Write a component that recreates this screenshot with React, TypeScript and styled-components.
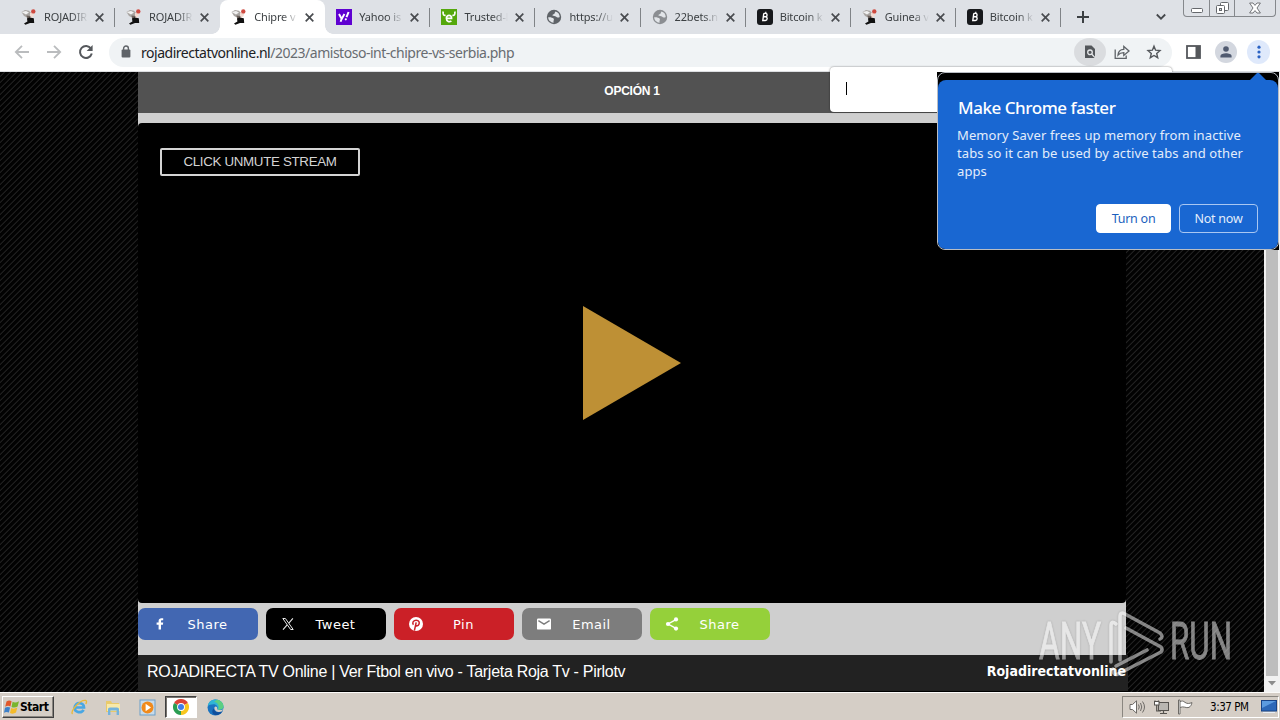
import React from 'react';
import styled, { createGlobalStyle, css } from 'styled-components';

type Favicon = 'roja' | 'yahoo' | 'trusted' | 'globe' | 'globeLight' | 'bitcoin';

interface ITab {
  title: string;
  icon: Favicon;
  active?: boolean;
  // divider on the right side of the tab
  divider?: boolean;
}

const tabs: ITab[] = [
  { title: 'ROJADIR', icon: 'roja', divider: true },
  { title: 'ROJADIR', icon: 'roja' },
  { title: 'Chipre v', icon: 'roja', active: true },
  { title: 'Yahoo is', icon: 'yahoo', divider: true },
  { title: 'Trusted-l', icon: 'trusted', divider: true },
  { title: 'https://u', icon: 'globe', divider: true },
  { title: '22bets.n', icon: 'globeLight', divider: true },
  { title: 'Bitcoin k', icon: 'bitcoin', divider: true },
  { title: 'Guinea v', icon: 'roja', divider: true },
  { title: 'Bitcoin k', icon: 'bitcoin', divider: true },
];

const uiFont = '"DejaVu Sans Condensed", "DejaVu Sans", sans-serif';
const softFont = '"Noto Sans", "Open Sans", sans-serif';

const GlobalStyle = createGlobalStyle`
  * { box-sizing: border-box; }
  body {
    margin: 0;
    overflow: hidden;
    font-family: "Liberation Sans", sans-serif;
  }
  svg { display: block; flex: none; }
`;

const Screen = styled.div`
  position: relative;
  display: flex;
  flex-direction: column;
  width: 1280px;
  height: 720px;
  overflow: hidden;
`;

/* ---- tab strip ---- */

const TabStrip = styled.div`
  display: flex;
  height: 34px;
  padding-left: 10px;
  background: #dee1e6;
`;

const TabItem = styled.div<{ $active?: boolean; $divider?: boolean }>`
  position: relative;
  display: flex;
  align-items: center;
  width: 105.1px;
  height: 34px;
  padding-left: 11px;
  ${p => p.$active && css`
    background: #fff;
    border-radius: 8px 8px 0 0;
    &::before, &::after {
      content: "";
      position: absolute;
      bottom: 0;
      width: 8px;
      height: 8px;
    }
    &::before {
      left: -8px;
      background: radial-gradient(circle at 0 0, transparent 7.5px, #fff 8px);
    }
    &::after {
      right: -8px;
      background: radial-gradient(circle at 100% 0, transparent 7.5px, #fff 8px);
    }
  `}
  ${p => p.$divider && css`
    &::after {
      content: "";
      position: absolute;
      right: 0;
      top: 8px;
      width: 1px;
      height: 19px;
      background: #808387;
    }
  `}
`;

const TabTitle = styled.span`
  width: 46px;
  margin-left: 7px;
  white-space: nowrap;
  font: 11px/16px ${softFont};
  letter-spacing: -0.15px;
  color: #3c4043;
  mask-image: linear-gradient(90deg, #000 28px, transparent 44px);
`;

const TabClose = styled.span`
  display: flex;
  margin-left: 5px;
`;

const NewTab = styled.div`
  display: flex;
  align-items: center;
  width: 44px;
  padding-left: 16px;
`;

const StripRight = styled.div`
  display: flex;
  align-items: flex-start;
  margin-left: auto;
  padding-right: 4px;
`;

const TabSearch = styled.div`
  display: flex;
  padding: 13px 17px 0 0;
`;

const WindowControls = styled.div`
  display: flex;
  height: 17px;
  border: 1px solid #85888c;
  border-top: 0;
  border-radius: 0 0 4px 4px;
`;

const WindowControl = styled.div<{ $width: number }>`
  display: flex;
  align-items: center;
  justify-content: center;
  width: ${p => p.$width}px;
  & + & { border-left: 1px solid #85888c; }
`;

/* ---- toolbar ---- */

const Toolbar = styled.div`
  display: flex;
  align-items: center;
  height: 38px;
  padding: 0 9px 1px 13px;
  background: #fff;
  border-bottom: 1px solid #dcdee1;
`;

const NavButtons = styled.div`
  display: flex;
  align-items: center;
  gap: 14px;
  width: 96px;
`;

const Omnibox = styled.div`
  display: flex;
  align-items: center;
  width: 1063px;
  height: 29px;
  padding: 0 2px 0 12px;
  border-radius: 15px;
  background: #f0f3f5;
`;

const Url = styled.span`
  margin: 1px 0 0 9px;
  font: 14px/20px ${softFont};
  letter-spacing: -0.48px;
  color: #686c71;
  b { font-weight: 400; color: #202124; }
`;

const OmniIcons = styled.div`
  display: flex;
  align-items: center;
  margin-left: auto;
`;

const RoundButton = styled.span<{ $bg?: string; $width: number; $height: number }>`
  display: flex;
  align-items: center;
  justify-content: center;
  width: ${p => p.$width}px;
  height: ${p => p.$height}px;
  border-radius: 50%;
  background: ${p => p.$bg || 'transparent'};
`;

const ToolbarRight = styled.div`
  display: flex;
  align-items: center;
  gap: 10px;
  flex: 1;
  padding-left: 14px;
`;

/* ---- page ---- */

const Viewport = styled.div`
  display: flex;
  height: 620px;
`;

const PageBackground = styled.div`
  display: flex;
  width: 1264px;
  padding-left: 138px;
  background: #000 repeating-linear-gradient(135deg, #020202 0, #020202 2.4px, #262626 3.3px, #020202 4.243px);
`;

const PageColumn = styled.div`
  display: flex;
  flex-direction: column;
  width: 990px;
`;

const OptionBar = styled.div`
  width: 988px;
  height: 41px;
  background: #525252;
  color: #fff;
  font-size: 12px;
  font-weight: 700;
  line-height: 38px;
  letter-spacing: -0.25px;
  text-align: center;
`;

const PlayerFrame = styled.div`
  width: 988px;
  padding-top: 10px;
  background: #cfcfcf;
`;

const Player = styled.div`
  display: flex;
  flex-direction: column;
  height: 480px;
  padding: 25px 22px;
  border-radius: 4px;
  background: #000;
`;

const UnmuteButton = styled.button`
  width: 200px;
  height: 28px;
  padding: 0;
  border: 2px solid #d4d4d4;
  border-radius: 2px;
  background: #000;
  color: #d4d4d4;
  font: 13.33px/24px "Liberation Sans", sans-serif;
  letter-spacing: -0.32px;
`;

const PlayIcon = styled.svg`
  margin: 130px 0 0 423px;
`;

const ShareBar = styled.div`
  display: flex;
  gap: 8px;
  height: 52px;
  padding-top: 5px;
`;

const ShareButton = styled.div<{ $color: string }>`
  display: flex;
  align-items: center;
  width: 120px;
  height: 32px;
  padding-left: 14px;
  border-radius: 7px;
  background: ${p => p.$color};
`;

const ShareLabel = styled.span`
  flex: 1;
  padding: 2px 11px 0 0;
  text-align: center;
  color: #fff;
  font: 13px/20px "DejaVu Sans", sans-serif;
  letter-spacing: 0.45px;
`;

const PageFooter = styled.div`
  display: flex;
  justify-content: space-between;
  height: 37px;
  padding: 6px 2px 0 9px;
  border-bottom: 1px solid #000;
  background: #222;
  color: #fff;
  font-size: 16px;
  line-height: 21px;
  letter-spacing: -0.29px;
`;

const SiteName = styled.b`
  font: 700 14px/20px "DejaVu Sans Condensed", "DejaVu Sans", sans-serif;
  letter-spacing: 0;
`;

const Scrollbar = styled.div`
  display: flex;
  flex-direction: column;
  align-items: center;
  justify-content: flex-end;
  width: 16px;
  padding-bottom: 6px;
  background: #f1f1f1;
`;

const ScrollThumb = styled.div`
  width: 12px;
  flex: 1;
  margin-bottom: 5px;
  background: #bdbdbd;
`;

/* ---- popups ---- */

const FindPopup = styled.div`
  position: absolute;
  left: 830px;
  top: 67px;
  display: flex;
  align-items: center;
  width: 342px;
  height: 45px;
  padding: 0 0 3px 16px;
  border-radius: 4px;
  background: #fff;
  box-shadow: 0 0 2px rgba(0, 0, 0, 0.55);
`;

const Caret = styled.span`
  width: 1px;
  height: 13px;
  background: #000;
`;

const BubbleFrame = styled.div`
  position: absolute;
  left: 937px;
  top: 72px;
  width: 342px;
  height: 178px;
  background: #000;
`;

const BubbleOutline = styled.div`
  display: flex;
  flex-direction: column;
  height: 178px;
  border: 1px solid #b9bdc4;
  border-radius: 8px;
  overflow: hidden;
`;

const BubbleArrow = styled.svg`
  align-self: flex-end;
  margin-right: 12px;
`;

const BubbleBody = styled.div`
  flex: 1;
  padding: 17px 20px 0 19px;
  border-radius: 8px 8px 7px 7px;
  background: #1967d2;
  color: #fff;
`;

const BubbleTitle = styled.div`
  padding-left: 1px;
  font: 500 17px/21px ${softFont};
  letter-spacing: -0.45px;
`;

const BubbleText = styled.div`
  margin-top: 8px;
  color: #e3edfb;
  font: 13px/18px ${softFont};
  letter-spacing: 0.1px;
  white-space: nowrap;
`;

const BubbleActions = styled.div`
  display: flex;
  justify-content: flex-end;
  gap: 8px;
  margin-top: 24px;
`;

const BubbleButton = styled.button<{ $primary?: boolean }>`
  width: ${p => (p.$primary ? 75 : 79)}px;
  height: 29px;
  padding: 0;
  border: 1px solid ${p => (p.$primary ? '#fff' : '#a9c7f2')};
  border-radius: 4px;
  background: ${p => (p.$primary ? '#fff' : '#1967d2')};
  color: ${p => (p.$primary ? '#1b5fbe' : '#e3edfb')};
  font: 12.5px/20px ${softFont};
  letter-spacing: -0.25px;
`;

const Watermark = styled.svg`
  position: absolute;
  left: 1030px;
  top: 604px;
  filter: drop-shadow(0 0 1px rgba(0, 0, 0, 0.35));
`;

/* ---- taskbar ---- */

const Taskbar = styled.div`
  display: flex;
  align-items: center;
  height: 28px;
  padding: 1px 1px 0 2px;
  border-top: 1px solid #fbfaf8;
  background: #d5cec6;
`;

const StartButton = styled.div`
  display: flex;
  align-items: center;
  width: 52px;
  height: 22px;
  padding-left: 1px;
  border: 1px solid;
  border-color: #fff #404040 #404040 #fff;
  box-shadow: inset -1px -1px #8a8680;
  font: 700 12px/20px ${uiFont};
  letter-spacing: -0.45px;
`;

const QuickLaunch = styled.div`
  display: flex;
  align-items: center;
  margin-left: 8px;
`;

const LaunchItem = styled.div<{ $pressed?: boolean }>`
  display: flex;
  align-items: center;
  justify-content: center;
  width: 34px;
  height: 22px;
  ${p => p.$pressed && css`
    width: 32px;
    margin: 0 1px;
    background: #fff;
    border: 1px solid;
    border-color: #404040 #fff #fff #404040;
    box-shadow: inset 1px 1px #77736e;
  `}
`;

const Tray = styled.div`
  display: flex;
  align-items: center;
  width: 157px;
  height: 22px;
  margin-left: auto;
  padding-left: 6px;
  border: 1px solid;
  border-color: #8a8680 #fff #fff #8a8680;
`;

const TrayIcons = styled.div`
  display: flex;
  gap: 7px;
`;

const Clock = styled.span`
  margin-left: 17px;
  margin-right: 12px;
  white-space: nowrap;
  font: 11.5px/16px ${uiFont};
  letter-spacing: -0.45px;
`;

const RojaIcon = () => (
  <svg width="16" height="16" viewBox="0 0 16 16">
    <path d="M0.5 3 L4 1 L8 1.8 L10 4 L9.4 7 L6 8.6 L3 7z" fill="#a9a5a2" />
    <path d="M0.5 3 L5 2 L8 3.6 L5 5.4z" fill="#f1f1f1" />
    <path d="M9 4 L13.4 3.6 L12.6 7 L9 10z" fill="#f3dcd3" />
    <circle cx="12.3" cy="2.4" r="2.2" fill="#cf4a40" />
    <path d="M5.4 6.5 L9.5 7 L9 10 L6.4 10z" fill="#6b605b" />
    <path d="M6 9.6 L8.4 8.6 L12.8 9.2 L13.2 14 L9 14 L4.4 15.8 L3 14.6 L6.4 12.6z" fill="#111" />
  </svg>
);

const YahooIcon = () => (
  <svg width="16" height="16" viewBox="0 0 16 16">
    <rect width="16" height="16" fill="#5f01d1" />
    <path d="M3 5 L5.7 10 L8.4 5 M5.7 9.5 L4.6 12.8" fill="none" stroke="#fff" strokeWidth="1.9" />
    <path d="M12.6 3 L10.5 8.2" stroke="#fff" strokeWidth="2" />
    <circle cx="9.8" cy="10.3" r="1.1" fill="#fff" />
  </svg>
);

const TrustedIcon = () => (
  <svg width="16" height="16" viewBox="0 0 16 16">
    <rect width="16" height="16" fill="#55a80c" />
    <path d="M2.2 2.5 C1.6 5.4 2.6 6.6 4.6 6.4 M13.8 2.5 C14.4 5.4 13.4 6.6 11.4 6.4" fill="none" stroke="#fff" strokeWidth="1.7" />
    <path d="M5.5 9.4 H10.6 C10.8 5.4 5.4 5.4 5.4 9.3 C5.4 12.9 8.5 13.2 10.4 12" fill="none" stroke="#fff" strokeWidth="1.7" />
  </svg>
);

const GlobeIcon = ({ color }: { color: string }) => (
  <svg width="16" height="16" viewBox="0 0 16 16">
    <circle cx="8" cy="8" r="7.2" fill={color} />
    <path d="M2.2 8.3 C4.5 8 6.6 8.6 7.6 9.6 C8.6 10.8 7 11.8 7.6 13.7 C4.5 13.5 2.2 11.2 2.2 8.3z" fill="#e1e4e8" />
    <path d="M9.4 2.5 C12 3 13.6 5.2 13.7 7.9 C12.4 9 10.8 8.4 10 7.4 L6.4 6.6 C6.2 5.2 8.6 5.4 8.6 4.2z" fill="#e1e4e8" />
  </svg>
);

const BitcoinIcon = () => (
  <svg width="16" height="16" viewBox="0 0 16 16">
    <rect width="16" height="16" rx="3" fill="#17191c" />
    <path d="M6.8 4.4 H8.6 C10.6 4.4 10.6 7.5 8.6 7.8 H6.8 M6.2 7.8 H8.6 C10.9 8 10.5 11.5 8.4 11.5 H5.8 L6.8 4.4" fill="none" stroke="#fff" strokeWidth="1.4" />
    <path d="M8.8 2.8 V4" stroke="#fff" strokeWidth="1.2" />
  </svg>
);

const renderFavicon = (icon: Favicon) => {
  switch (icon) {
    case 'yahoo': return <YahooIcon />;
    case 'trusted': return <TrustedIcon />;
    case 'globe': return <GlobeIcon color="#5f6368" />;
    case 'globeLight': return <GlobeIcon color="#8b8e92" />;
    case 'bitcoin': return <BitcoinIcon />;
    default: return <RojaIcon />;
  }
};

const BrowserTabs = () => (
  <TabStrip>
    {tabs.map((tab, i) => (
      <TabItem key={i} $active={tab.active} $divider={tab.divider}>
        {renderFavicon(tab.icon)}
        <TabTitle>{tab.title}</TabTitle>
        <TabClose>
          <svg width="9" height="9" viewBox="0 0 9 9">
            <path d="M0.7 0.7 L8.3 8.3 M8.3 0.7 L0.7 8.3" stroke="#494c50" strokeWidth="1.7" />
          </svg>
        </TabClose>
      </TabItem>
    ))}
    <NewTab>
      <svg width="12" height="12" viewBox="0 0 12 12">
        <path d="M6 0 V12 M0 6 H12" stroke="#3c4043" strokeWidth="2" />
      </svg>
    </NewTab>
    <StripRight>
      <TabSearch>
        <svg width="10" height="8" viewBox="0 0 10 8">
          <path d="M0.8 1.5 L5 5.7 L9.2 1.5" fill="none" stroke="#45484c" strokeWidth="1.8" />
        </svg>
      </TabSearch>
      <WindowControls>
        <WindowControl $width={25}>
          <svg width="12" height="16" viewBox="0 0 12 16">
            <rect x="0.5" y="8.5" width="11" height="4" rx="1" fill="#fff" stroke="#65686c" />
          </svg>
        </WindowControl>
        <WindowControl $width={25}>
          <svg width="13" height="14" viewBox="0 0 13 14">
            <rect x="4.5" y="1.5" width="8" height="8" rx="1" fill="#fff" stroke="#65686c" />
            <rect x="0.5" y="4.5" width="8" height="8" rx="1" fill="#fff" stroke="#65686c" />
            <rect x="3.5" y="7.5" width="2" height="2" fill="#dee1e6" stroke="#65686c" />
          </svg>
        </WindowControl>
        <WindowControl $width={41}>
          <svg width="12" height="12" viewBox="0 0 12 12">
            <path d="M0.6 1 H4 L6 3.4 L8 1 H11.4 L8 6 L11.4 11 H8 L6 8.6 L4 11 H0.6 L4 6z" fill="#fff" stroke="#65686c" strokeWidth="0.9" />
          </svg>
        </WindowControl>
      </WindowControls>
    </StripRight>
  </TabStrip>
);

const BrowserToolbar = () => (
  <Toolbar>
    <NavButtons>
      <svg width="18" height="18" viewBox="0 0 18 18" fill="none" stroke="#babcbe" strokeWidth="1.8">
        <path d="M16 9 H3 M9 2.8 L2.8 9 L9 15.2" />
      </svg>
      <svg width="18" height="18" viewBox="0 0 18 18" fill="none" stroke="#babcbe" strokeWidth="1.8">
        <path d="M2 9 H15 M9 2.8 L15.2 9 L9 15.2" />
      </svg>
      <svg width="18" height="18" viewBox="0 0 18 18">
        <path d="M14 5.6 A6 6 0 1 0 14.8 10.6" fill="none" stroke="#55585c" strokeWidth="2" />
        <path d="M15.6 2 V8 H9.6z" fill="#55585c" />
      </svg>
    </NavButtons>
    <Omnibox>
      <svg width="11" height="14" viewBox="0 0 11 14">
        <rect x="0.6" y="4.6" width="8.8" height="8" rx="1" fill="#5f6368" />
        <path d="M2.6 6 V3.4 A2.4 2.4 0 0 1 7.4 3.4 V6" fill="none" stroke="#5f6368" strokeWidth="1.4" />
      </svg>
      <Url><b>rojadirectatvonline.nl</b>/2023/amistoso-int-chipre-vs-serbia.php</Url>
      <OmniIcons>
        <RoundButton $bg="#dadcdf" $width={32} $height={28}>
          <svg width="12" height="14" viewBox="0 0 12 14">
            <path d="M1 0.5 H7.5 L11 4 V13 H1z" fill="#54575b" />
            <circle cx="6" cy="7.3" r="2.3" fill="#54575b" stroke="#e6e8ea" strokeWidth="1.3" />
            <path d="M7.6 9 L11 12.6" stroke="#e6e8ea" strokeWidth="1.3" />
          </svg>
        </RoundButton>
        <RoundButton $width={32} $height={28}>
          <svg width="16" height="16" viewBox="0 0 16 16" fill="none" stroke="#5f6368" strokeWidth="1.3">
            <path d="M1.2 5.5 V14.3 H12.2 V11.5" />
            <path d="M4 11 C4.3 7.2 6.5 5.4 9.8 5.3 V2.4 L15 7 L9.8 11.4 V8.6 C7.4 8.6 5.5 9.2 4 11z" />
          </svg>
        </RoundButton>
        <RoundButton $width={32} $height={28}>
          <svg width="16" height="16" viewBox="0 0 16 16">
            <path d="M8 2.2 L9.6 6.2 L14 6.6 L10.7 9.5 L11.7 13.7 L8 11.5 L4.3 13.7 L5.3 9.5 L2 6.6 L6.4 6.2z" fill="none" stroke="#54575b" strokeWidth="1.4" />
          </svg>
        </RoundButton>
      </OmniIcons>
    </Omnibox>
    <ToolbarRight>
      <svg width="19" height="14" viewBox="0 0 19 14">
        <rect x="1" y="1" width="13" height="12" fill="none" stroke="#54575b" strokeWidth="1.8" />
        <rect x="9.5" y="1" width="4.5" height="12" fill="#54575b" />
      </svg>
      <RoundButton $bg="#d3d7df" $width={22} $height={22}>
        <svg width="12" height="12" viewBox="0 0 12 12" fill="#505a70">
          <circle cx="6" cy="3" r="2.8" />
          <path d="M0.4 11.6 V10 C0.6 6.4 11.4 6.4 11.6 10 V11.6z" />
        </svg>
      </RoundButton>
      <RoundButton $bg="#dfe9fb" $width={23} $height={24}>
        <svg width="4" height="14" viewBox="0 0 4 14" fill="#2a62c4">
          <circle cx="2" cy="2.2" r="1.6" />
          <circle cx="2" cy="7" r="1.6" />
          <circle cx="2" cy="11.8" r="1.6" />
        </svg>
      </RoundButton>
    </ToolbarRight>
  </Toolbar>
);

const ShareButtons = () => (
  <ShareBar>
    <ShareButton $color="#4267b2">
      <svg width="16" height="16" viewBox="0 0 16 16">
        <path d="M6.6 13.5 V8.8 H4.6 V6.5 H6.6 V5 C6.6 3 7.8 2.2 9.4 2.2 L11.2 2.3 V4.3 H10 C9.1 4.3 9 4.7 9 5.4 V6.5 H11.2 L10.9 8.8 H9 V13.5z" fill="#fff" />
      </svg>
      <ShareLabel>Share</ShareLabel>
    </ShareButton>
    <ShareButton $color="#000">
      <svg width="16" height="16" viewBox="0 0 16 16" fill="none" stroke="#e8e8e8">
        <path d="M2.8 2.5 H5.4 L13.2 13.5 H10.6z" strokeWidth="1" />
        <path d="M12.9 2.4 L8.8 7.2 M7.2 8.8 L3 13.6" strokeWidth="1.1" />
      </svg>
      <ShareLabel>Tweet</ShareLabel>
    </ShareButton>
    <ShareButton $color="#cb2027">
      <svg width="16" height="16" viewBox="0 0 16 16">
        <circle cx="8" cy="8" r="7" fill="#fff" />
        <path d="M6.4 14.6 L8.2 6.4 M5.4 8.8 C3.8 6.6 5.6 4.2 8.2 4.2 C11 4.2 11.8 6.4 10.9 8.4 C10.1 10.2 8.4 10.2 7.6 9.2" fill="none" stroke="#cb2027" strokeWidth="1.5" />
      </svg>
      <ShareLabel>Pin</ShareLabel>
    </ShareButton>
    <ShareButton $color="#7d7d7d">
      <svg width="16" height="16" viewBox="0 0 16 16">
        <rect x="1" y="2.4" width="14" height="11.2" rx="1.2" fill="#fff" />
        <path d="M2.4 4.6 L8 8.2 L13.6 4.6" fill="none" stroke="#7d7d7d" strokeWidth="1.4" />
      </svg>
      <ShareLabel>Email</ShareLabel>
    </ShareButton>
    <ShareButton $color="#95d03a">
      <svg width="16" height="16" viewBox="0 0 16 16">
        <path d="M12 3.6 L4 8 L12 12.4" fill="none" stroke="#fff" strokeWidth="1.4" />
        <g fill="#fff">
          <circle cx="12" cy="3.4" r="2.1" />
          <circle cx="4" cy="8" r="2.1" />
          <circle cx="12" cy="12.6" r="2.1" />
        </g>
      </svg>
      <ShareLabel>Share</ShareLabel>
    </ShareButton>
  </ShareBar>
);

const MemorySaverBubble = () => (
  <BubbleFrame>
    <BubbleOutline>
      <BubbleArrow width="16" height="7" viewBox="0 0 16 7">
        <path d="M0 7 L7 0 H9 L16 7z" fill="#1967d2" />
      </BubbleArrow>
      <BubbleBody>
        <BubbleTitle>Make Chrome faster</BubbleTitle>
        <BubbleText>
          Memory Saver frees up memory from inactive<br />
          tabs so it can be used by active tabs and other<br />
          apps
        </BubbleText>
        <BubbleActions>
          <BubbleButton $primary>Turn on</BubbleButton>
          <BubbleButton>Not now</BubbleButton>
        </BubbleActions>
      </BubbleBody>
    </BubbleOutline>
  </BubbleFrame>
);

const AnyRunMark = () => (
  <Watermark width="210" height="74" viewBox="0 0 210 74" opacity="0.5">
    <g fill="#fff" stroke="#fff" strokeWidth="0.9" fontFamily="Roboto, sans-serif" fontSize="52">
      <text x="9" y="55" textLength="62" lengthAdjust="spacingAndGlyphs">ANY</text>
      <text x="140" y="55" textLength="62" lengthAdjust="spacingAndGlyphs">RUN</text>
    </g>
    <g fill="none" stroke="#fff" strokeWidth="3.6" strokeLinejoin="round" strokeLinecap="round">
      <path d="M86 20 Q81 16 81 22 V58" />
      <path d="M90 56 V13 Q90 7 95 10 L130 29 Q134 33 130 35" />
      <path d="M96 24 L131 43 Q133 46 131 48 L88 70 Q83 72 83 65" />
      <path d="M86 62 L117 46" />
    </g>
  </Watermark>
);

const WindowsTaskbar = () => (
  <Taskbar>
    <StartButton>
      <svg width="16" height="16" viewBox="0 0 16 16">
        <path d="M2.5 2.5 C4.5 1 6 1.3 7.6 2.2 L6.4 7.4 C4.8 6.5 3 6.6 1.2 7.7z" fill="#e2582a" />
        <path d="M8.6 2.8 C10.5 3.7 12.5 3.6 15 2.2 L13.6 7.4 C11.6 8.7 9.5 8.8 7.5 7.9z" fill="#79b52f" />
        <path d="M1 8.8 C2.7 7.7 4.6 7.6 6.1 8.5 L4.9 13.6 C3.2 12.7 1.5 12.8 0 13.8z" fill="#3d80c9" />
        <path d="M7.2 9.1 C9 10 11.1 9.9 13.3 8.6 L12 13.6 C10 15 7.9 15 6 14.1z" fill="#f4bb2b" />
      </svg>
      Start
    </StartButton>
    <QuickLaunch>
      <LaunchItem>
        <svg width="18" height="18" viewBox="0 0 18 18" fill="none">
          <path d="M4.5 9.5 H14 C14 4 5 3.4 4.6 9.6 C4.6 14.8 11.5 15.6 13.6 11.8" stroke="#49a7e3" strokeWidth="2.7" />
          <path d="M2.5 16 C-0.5 13.5 10 1.5 15.6 2.4 C17 2.8 16.6 4.5 15.8 6" stroke="#e9b93a" strokeWidth="1.4" />
        </svg>
      </LaunchItem>
      <LaunchItem>
        <svg width="18" height="18" viewBox="0 0 18 18">
          <path d="M2 3 H7 L8 5 H15 V14 H2z" fill="#e9ca6b" />
          <path d="M3 6 H16 V13 H3z" fill="#f8e9a9" />
          <path d="M4 17 V11 Q4 9.5 6 9.5 H13 Q15 9.5 15 11 V17 H12.6 V12.5 H6.4 V17z" fill="#74b3dc" />
        </svg>
      </LaunchItem>
      <LaunchItem>
        <svg width="17" height="17" viewBox="0 0 17 17">
          <rect x="1" y="1" width="15" height="15" fill="#c8dbea" stroke="#6c9fc9" />
          <circle cx="8.5" cy="8.5" r="6" fill="#f08a1c" />
          <path d="M6.6 4.8 L12 8.5 L6.6 12.2z" fill="#fff" />
        </svg>
      </LaunchItem>
      <LaunchItem $pressed>
        <svg width="16" height="16" viewBox="0 0 16 16">
          <path d="M8 8 L1.07 4 A8 8 0 0 1 14.93 4z" fill="#db4437" />
          <path d="M8 8 L14.93 4 A8 8 0 0 1 8 16z" fill="#f8c61d" />
          <path d="M8 8 L8 16 A8 8 0 0 1 1.07 4z" fill="#2a9d52" />
          <circle cx="8" cy="8" r="3.9" fill="#fff" />
          <circle cx="8" cy="8" r="3" fill="#3f7de8" />
        </svg>
      </LaunchItem>
      <LaunchItem>
        <svg width="17" height="17" viewBox="0 0 17 17">
          <circle cx="8.5" cy="8.5" r="8" fill="#1a73c0" />
          <path d="M0.8 7 C1.5 2.5 5 0.5 8.5 0.5 C14 0.5 16.5 4.5 16.5 7.5 C16.4 10.6 12.5 11.4 10.4 10.4 C11.5 7.8 9.5 5.2 6.5 5.2 C4 5.2 2 6 0.8 7z" fill="#2fb5d6" />
          <path d="M10 0.7 C14.5 1.4 16.5 4.6 16.5 7.5 C16.4 10.2 13 11.2 11 10.6 C12.5 8 11.8 3.5 7 3z" fill="#5ccf82" />
          <path d="M7 9.5 C6.8 12.4 10.5 14.2 14.6 12.6 L15.3 12.5 C13 16 9 16.6 7.2 15.8 C4.5 14 5 10.5 7 9.5z" fill="#114f9c" />
          <path d="M7.4 8.4 C8.4 6.6 10.8 7.6 10.2 10 C10.6 11.2 13.4 11.6 16 10.2 C15.6 11.6 15 12.2 14.6 12.6 C11 13.8 7 12 7.4 8.4z" fill="#d5cec6" />
        </svg>
      </LaunchItem>
    </QuickLaunch>
    <Tray>
      <TrayIcons>
        <svg width="17" height="16" viewBox="0 0 17 16" fill="none" stroke="#6d6a66">
          <path d="M1 5.5 H3.5 L7.5 1.8 V14.2 L3.5 10.5 H1z" fill="#fff" />
          <path d="M9.5 5.5 Q11 8 9.5 10.5 M11.5 4 Q14 8 11.5 12 M13.5 2.5 Q17.5 8 13.5 13.5" />
        </svg>
        <svg width="17" height="16" viewBox="0 0 17 16" fill="none" stroke="#55524e">
          <rect x="5.5" y="3.5" width="10" height="8" fill="#b9b6b1" />
          <path d="M2 1.5 V5 H5.5 V1.5 M3.7 5 V12 H8 M7 14.5 H14 M10.5 12 V14" strokeWidth="1.2" />
          <rect x="1.5" y="2.5" width="4.5" height="3.5" fill="#fff" />
        </svg>
        <svg width="16" height="16" viewBox="0 0 16 16">
          <path d="M2.5 3 C5 1.4 6.5 2 8 3.4 C10.5 5 12 4.6 15 3.6 C14.4 6 13.8 7.3 12 8.4 C9 9.6 7 6.6 2.5 8.6z" fill="#fff" stroke="#6d6a66" />
          <path d="M1.5 1 V15 H3 V1z" fill="#fff" stroke="#6d6a66" />
        </svg>
      </TrayIcons>
      <Clock>3:37 PM</Clock>
      <svg width="16" height="14" viewBox="0 0 16 14">
        <rect x="0.5" y="0.5" width="15" height="10.5" fill="#2c68b8" stroke="#184488" />
        <path d="M1 1 H15 L1 8z" fill="#5b9be0" />
        <path d="M2 12.5 H14" stroke="#e9eef4" />
      </svg>
    </Tray>
  </Taskbar>
);

const App = () => (
  <Screen>
    <GlobalStyle />
    <BrowserTabs />
    <BrowserToolbar />
    <Viewport>
      <PageBackground>
        <PageColumn>
          <OptionBar>OPCIÓN 1</OptionBar>
          <PlayerFrame>
            <Player>
              <UnmuteButton>CLICK UNMUTE STREAM</UnmuteButton>
              <PlayIcon width="98" height="114" viewBox="0 0 98 114">
                <path d="M0 0 L98 57 L0 114z" fill="#be9035" />
              </PlayIcon>
            </Player>
            <ShareButtons />
          </PlayerFrame>
          <PageFooter>
            <span>ROJADIRECTA TV Online | Ver Ftbol en vivo - Tarjeta Roja Tv - Pirlotv</span>
            <SiteName>Rojadirectatvonline</SiteName>
          </PageFooter>
        </PageColumn>
      </PageBackground>
      <Scrollbar>
        <ScrollThumb />
        <svg width="8" height="5" viewBox="0 0 8 5">
          <path d="M0 0 H8 L4 4.5z" fill="#8c8c8c" />
        </svg>
      </Scrollbar>
    </Viewport>
    <WindowsTaskbar />
    <FindPopup>
      <Caret />
    </FindPopup>
    <MemorySaverBubble />
    <AnyRunMark />
  </Screen>
);

export default App;
